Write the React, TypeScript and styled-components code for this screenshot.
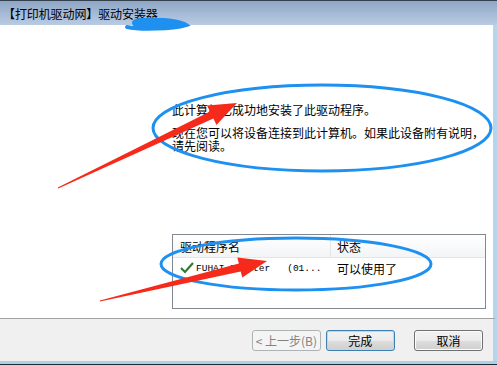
import React from 'react';
import styled, { createGlobalStyle } from 'styled-components';

const GlobalStyle = createGlobalStyle`
  html, body {
    margin: 0;
    padding: 0;
    background: #ffffff;
  }
  body {
    font-family: 'Noto Sans CJK SC', 'DejaVu Sans', sans-serif;
    font-size: 12px;
    color: #000000;
  }
`;

const CJK = `'Noto Sans CJK SC', 'Noto Sans', sans-serif`;

export default function App() {
  return (
    <>
      <GlobalStyle />
      <Window>
        <TitleBar>
          <Title>【打印机驱动网】驱动安装器</Title>
        </TitleBar>
        <Body>
          <SidePanel />
          <Content>
            <Message>
              <Para>此计算机已成功地安装了此驱动程序。</Para>
              <Para>
                现在您可以将设备连接到此计算机。如果此设备附有说明，
                <br />
                请先阅读。
              </Para>
            </Message>
            <DriverList>
              <HeaderRow>
                <NameCell>驱动程序名</NameCell>
                <StatusCell $header>状态</StatusCell>
              </HeaderRow>
              <DriverRow>
                <NameCell>
                  <CheckIcon />
                  <DriverName>FUHAI Printer   (01...</DriverName>
                </NameCell>
                <StatusCell>可以使用了</StatusCell>
              </DriverRow>
            </DriverList>
          </Content>
        </Body>
        <ButtonBar>
          <Button disabled>&lt; 上一步(B)</Button>
          <Button $primary>完成</Button>
          <Spacer />
          <Button>取消</Button>
        </ButtonBar>
        <BottomFrame />
        <Annotations />
      </Window>
    </>
  );
}

function CheckIcon() {
  return (
    <svg width="14" height="12" viewBox="0 0 14 12">
      <path d="M1 6 L5 10 L13 1" fill="none" stroke="#2d7d2d" strokeWidth="2.2" strokeLinejoin="miter" />
    </svg>
  );
}

// blue circles and red arrows drawn on top of the screenshot
function Annotations() {
  return (
    <Overlay width="497" height="365" viewBox="0 0 497 365">
      <path
        d="M127 27 C140 30 172 29 186 25 C180 21 165 19 140 20 C134 21 132 23 136 25"
        stroke="#1e90f0"
        strokeWidth="4"
        fill="#1e90f0"
        strokeLinecap="round"
      />
      <ellipse cx="322" cy="128" rx="169" ry="43" fill="none" stroke="#1e90f0" strokeWidth="3" />
      <ellipse cx="296" cy="264" rx="135" ry="26" fill="none" stroke="#1e90f0" strokeWidth="3" />
      <polygon
        points="58.2,188.6 213.4,118.6 216.5,125 237,103 207,105.6 210,111.4 57.8,187.4"
        fill="#f52a1a"
      />
      <polygon
        points="100,301.6 240.7,271.4 242.3,277.6 267,261 237.3,257.4 238.9,263.6 100,300.4"
        fill="#f52a1a"
      />
    </Overlay>
  );
}

const Window = styled.div`
  position: relative;
  width: 497px;
  height: 365px;
  display: flex;
  flex-direction: column;
  background: #ffffff;
  overflow: hidden;
`;

const TitleBar = styled.div`
  height: 24px;
  border-top: 1px solid #33404e;
  background: linear-gradient(to bottom, #8ea5c4, #a9bdd8 60%, #b9cbe2);
  display: flex;
  align-items: center;
  padding-left: 3px;
`;

const Title = styled.span`
  font-family: ${CJK};
  font-size: 12px;
  color: #000000;
  letter-spacing: -0.1px;
`;

const Body = styled.div`
  flex: 1;
  display: flex;
  border-right: 4px solid #b4d6ec;
  border-bottom: 1px solid #a0a0a0;
`;

const SidePanel = styled.div`
  width: 172px;
  background: #ffffff;
`;

const Content = styled.div`
  flex: 1;
  display: flex;
  flex-direction: column;
  padding: 78px 7px 9px 0;
`;

const Message = styled.div`
  font-family: ${CJK};
  font-size: 12px;
  line-height: 13px;
`;

const Para = styled.p`
  margin: 0 0 10px 0;
`;

const DriverList = styled.div`
  margin-top: auto;
  height: 73px;
  border: 1px solid #828790;
  background: #ffffff;
`;

const HeaderRow = styled.div`
  display: flex;
  height: 22px;
  align-items: center;
  background: linear-gradient(to bottom, #ffffff, #f3f4f6);
  border-bottom: 1px solid #e3e5e8;
`;

const DriverRow = styled.div`
  display: flex;
  height: 20px;
  align-items: center;
`;

const NameCell = styled.div`
  width: 150px;
  padding-left: 7px;
  display: flex;
  align-items: center;
  gap: 2px;
  font-family: ${CJK};
  font-size: 12px;
`;

const StatusCell = styled.div<{ $header?: boolean }>`
  flex: 1;
  align-self: stretch;
  display: flex;
  align-items: center;
  padding-left: 6px;
  font-family: ${CJK};
  font-size: 12px;
  border-left: ${(p) => (p.$header ? '1px solid #e3e5e8' : '1px solid transparent')};
`;

const DriverName = styled.span`
  font-family: 'Liberation Mono', monospace;
  font-size: 9.5px;
  white-space: pre;
`;

const ButtonBar = styled.div`
  height: 42px;
  background: #f0f0f0;
  border-right: 4px solid #b4d6ec;
  display: flex;
  align-items: center;
  padding: 0 10px 0 252px;
  gap: 5px;
`;

const Spacer = styled.div`
  width: 10px;
`;

const Button = styled.button<{ $primary?: boolean }>`
  width: 72px;
  height: 21px;
  padding: 0;
  font-family: ${CJK};
  font-size: 12px;
  color: #000000;
  border-radius: 3px;
  border: 1px solid ${(p) => (p.$primary ? '#3c7fb1' : '#707070')};
  background: linear-gradient(to bottom, #f2f2f2 0%, #ebebeb 50%, #dddddd 51%, #cfcfcf 100%);
  box-shadow: ${(p) => (p.$primary ? 'inset 0 0 0 1px #a8e0f7' : 'inset 0 0 0 1px #fcfcfc')};

  &:disabled {
    color: #838383;
    border-color: #adb2b5;
    background: #f4f4f4;
    box-shadow: none;
  }
`;

const BottomFrame = styled.div`
  height: 3px;
  background: #a9d2e9;
  border-bottom: 1px solid #1f2a33;
`;

const Overlay = styled.svg`
  position: absolute;
  left: 0;
  top: 0;
  pointer-events: none;
`;
